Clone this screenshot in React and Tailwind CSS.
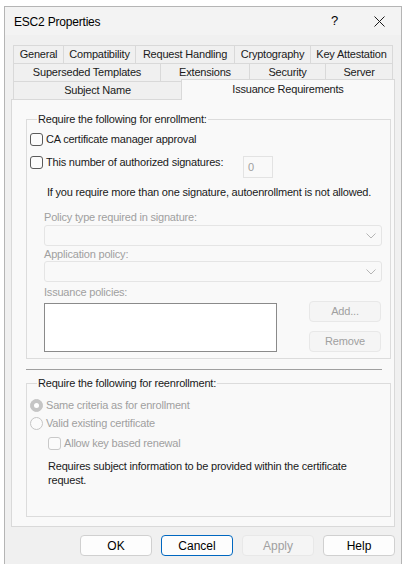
import React from 'react';

const font = { fontFamily: '"Liberation Sans", Arial, sans-serif' };

const Checkbox = ({ disabled }) => (
  <span
    className={`inline-block w-[13px] h-[13px] rounded-[3px] border bg-[#fbfbfb] shrink-0 ${
      disabled ? 'border-[#c9c9c9]' : 'border-[#5a5a5a]'
    }`}
  />
);

const Radio = ({ checked }) => (
  <span
    className={`inline-flex items-center justify-center w-[13px] h-[13px] rounded-full border shrink-0 ${
      checked ? 'bg-[#c5c5c5] border-[#c5c5c5]' : 'bg-[#fbfbfb] border-[#c5c5c5]'
    }`}
  >
    {checked && <span className="w-[5px] h-[5px] rounded-full bg-white" />}
  </span>
);

const Combo = () => (
  <div className="w-[338px] h-[21px] border border-[#e5e5e5] bg-[#f9f9f9] rounded-[3px] flex items-center justify-end pr-[5px]">
    <svg width="10" height="6" viewBox="0 0 10 6">
      <path d="M0.5 0.5 L5 5 L9.5 0.5" fill="none" stroke="#b5b5b5" strokeWidth="1" />
    </svg>
  </div>
);

const TabBtn = ({ w, label, last }) => (
  <div
    className={`h-[18px] border-t border-l border-[#d9d9d9] bg-[#f0f0f0] flex items-center justify-center text-[#1a1a1a] ${
      last ? 'border-r' : ''
    }`}
    style={{ width: w }}
  >
    {label}
  </div>
);

const DlgButton = ({ label, focused, disabled }) => (
  <div
    className={`w-[72px] h-[21px] rounded-[4px] border flex items-center justify-center ${
      focused
        ? 'border-[#0067c0] bg-[#fdfdfd] text-black'
        : disabled
        ? 'border-[#e8e8e8] bg-[#f5f5f5] text-[#a0a0a0]'
        : 'border-[#d0d0d0] bg-[#fdfdfd] text-black'
    }`}
  >
    {label}
  </div>
);

export default function App() {
  return (
    <div className="w-[405px] h-[564px] bg-white pl-[4px] pt-[6px] overflow-hidden text-[11px] tracking-[-0.2px]" style={font}>
      <div className="w-[398px] h-[570px] border-l border-t border-r border-[#b5b5b5] bg-[#f0f0f0] flex flex-col">
        {/* Title bar */}
        <div className="h-[28px] bg-[#f3f3f3] flex items-center pl-[9px] pr-[16px] text-[12px] text-black">
          <span className="mt-[1px]">ESC2 Properties</span>
          <span className="ml-auto text-[13px] mr-[36px]">?</span>
          <svg width="11" height="11" viewBox="0 0 11 11">
            <path d="M0.5 0.5 L10.5 10.5 M10.5 0.5 L0.5 10.5" stroke="#1a1a1a" strokeWidth="1" />
          </svg>
        </div>

        {/* Tabs + panel */}
        <div className="ml-[6px] mt-[10px] w-[384px] flex flex-col">
          <div className="flex px-[2px]">
            <TabBtn w={50} label="General" />
            <TabBtn w={72} label="Compatibility" />
            <TabBtn w={99} label="Request Handling" />
            <TabBtn w={76} label="Cryptography" />
            <TabBtn w={83} label="Key Attestation" last />
          </div>
          <div className="flex px-[2px]">
            <TabBtn w={147} label="Superseded Templates" />
            <TabBtn w={89} label="Extensions" />
            <TabBtn w={76} label="Security" />
            <TabBtn w={68} label="Server" last />
          </div>
          <div className="flex px-[2px] h-[18px]">
            <TabBtn w={168} label="Subject Name" />
            <div className="relative z-10 -mt-[2px] -mr-[2px] h-[21px] w-[214px] border-t border-l border-r border-[#d9d9d9] bg-[#f9f9f9] flex justify-center pt-[1px] text-[#1a1a1a]">
              Issuance Requirements
            </div>
          </div>

          <div className="h-[428px] border border-[#d9d9d9] bg-[#f9f9f9] pl-[14px] pr-[3px] flex flex-col text-[#1a1a1a]">
            {/* Enrollment group */}
            <fieldset className="mt-[11px] border border-[#dcdcdc] pl-[3px] pb-[5px] h-[248px]">
              <legend className="ml-[7px] px-[1px] leading-[16px]">Require the following for enrollment:</legend>
              <div className="mt-[4px] h-[16px] flex items-center gap-[3px]">
                <Checkbox />
                <span>CA certificate manager approval</span>
              </div>
              <div className="mt-[7px] flex items-start">
                <div className="h-[16px] flex items-center gap-[3px] w-[213px]">
                  <Checkbox />
                  <span>This number of authorized signatures:</span>
                </div>
                <div className="mt-[2px] w-[30px] h-[22px] border border-[#e3e3e3] bg-[#f9f9f9] flex items-center pl-[4px] text-[#a0a0a0]">0</div>
              </div>
              <div className="mt-[6px] ml-[17px] leading-[16px]">
                If you require more than one signature, autoenrollment is not allowed.
              </div>
              <div className="ml-[14px] text-[#a0a0a0]">
                <div className="mt-[10px] leading-[14px]">Policy type required in signature:</div>
                <div className="mt-[1px]"><Combo /></div>
                <div className="mt-[1px] leading-[14px]">Application policy:</div>
                <div className="mt-[0px]"><Combo /></div>
                <div className="mt-[3px] leading-[14px]">Issuance policies:</div>
                <div className="mt-[2px] flex items-start">
                  <div className="mt-[2px] w-[233px] h-[49px] border border-[#8a8a8a] bg-white" />
                  <div className="ml-[32px] flex flex-col gap-[9px]">
                    <DlgButton label="Add..." disabled />
                    <DlgButton label="Remove" disabled />
                  </div>
                </div>
              </div>
            </fieldset>

            <div className="mt-[10px] w-[356px] h-px bg-[#a0a0a0]" />

            {/* Reenrollment group */}
            <fieldset className="mt-[5px] border border-[#dcdcdc] pl-[3px] h-[142px]">
              <legend className="ml-[7px] px-[1px] leading-[16px]">Require the following for reenrollment:</legend>
              <div className="mt-[6px] h-[16px] flex items-center gap-[3px] text-[#a0a0a0]">
                <Radio checked />
                <span>Same criteria as for enrollment</span>
              </div>
              <div className="mt-[2px] h-[16px] flex items-center gap-[3px] text-[#a0a0a0]">
                <Radio />
                <span>Valid existing certificate</span>
              </div>
              <div className="mt-[4px] ml-[18px] h-[16px] flex items-center gap-[3px] text-[#a0a0a0]">
                <Checkbox disabled />
                <span>Allow key based renewal</span>
              </div>
              <div className="mt-[8px] ml-[18px] w-[318px] leading-[14px]">
                Requires subject information to be provided within the certificate request.
              </div>
            </fieldset>
          </div>
        </div>

        {/* Buttons */}
        <div className="mt-[8px] ml-[75px] flex gap-[9px] text-[12px] tracking-normal">
          <DlgButton label="OK" />
          <DlgButton label="Cancel" focused />
          <DlgButton label="Apply" disabled />
          <DlgButton label="Help" />
        </div>
      </div>
    </div>
  );
}
